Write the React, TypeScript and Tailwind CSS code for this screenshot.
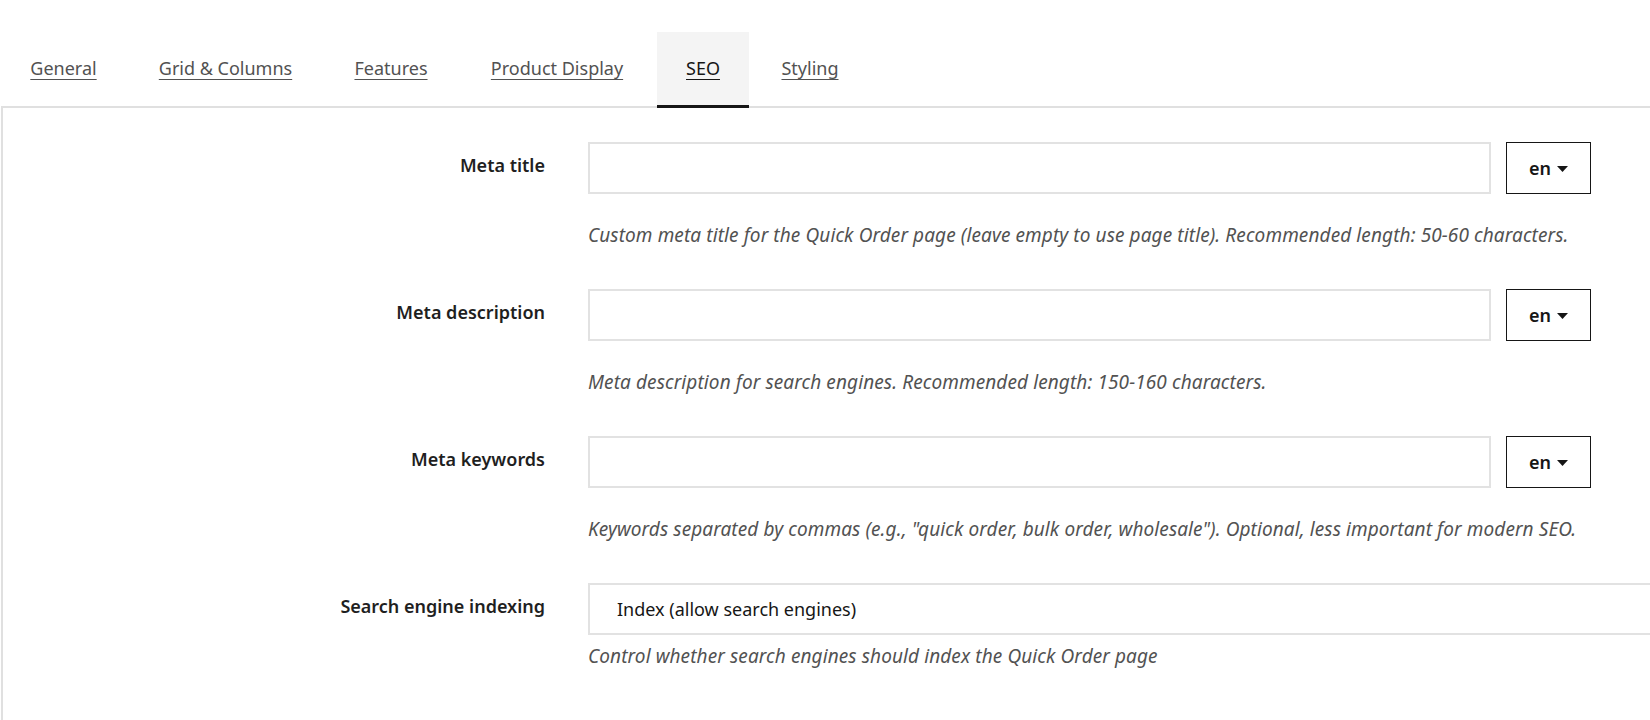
import React from "react";

const TABS = [
  { label: "General", w: "w-[125px]" },
  { label: "Grid & Columns", w: "w-[193px]" },
  { label: "Features", w: "w-[132px]" },
  { label: "Product Display", w: "w-[194px]" },
  { label: "SEO", w: "w-[92px]", active: true },
  { label: "Styling", w: "w-[116px]" },
];

const LANG_FIELDS = [
  {
    label: "Meta title",
    help: "Custom meta title for the Quick Order page (leave empty to use page title). Recommended length: 50-60 characters.",
  },
  {
    label: "Meta description",
    help: "Meta description for search engines. Recommended length: 150-160 characters.",
  },
  {
    label: "Meta keywords",
    help: 'Keywords separated by commas (e.g., "quick order, bulk order, wholesale"). Optional, less important for modern SEO.',
  },
];

function LangButton() {
  return (
    <button className="w-[85px] h-[52px] border border-[#161616] bg-white flex items-center justify-center gap-[6px] text-[18px] font-semibold text-[#161616]">
      <span>en</span>
      <svg width="11" height="6" viewBox="0 0 11 6" className="mt-px">
        <path d="M0 0h11L5.5 6z" fill="#161616" />
      </svg>
    </button>
  );
}

export default function App() {
  return (
    <div
      className="w-[1650px] h-[720px] overflow-hidden bg-white text-[#161616]"
      style={{ fontFamily: "'Noto Sans', Roboto, sans-serif" }}
    >
      {/* Tabs */}
      <div className="pt-8 pl-px flex gap-[3px] relative z-10">
        {TABS.map((t) => (
          <a
            key={t.label}
            href="#"
            className={`${t.w} h-[76px] flex items-center justify-center border-b-[3px] text-[18px] underline underline-offset-[4px] decoration-1 ${
              t.active
                ? "bg-[#f4f4f4] border-[#161616] text-[#161616]"
                : "border-transparent text-[#525252]"
            }`}
          >
            {t.label}
          </a>
        ))}
      </div>

      {/* Panel */}
      <div className="-mt-[2px] ml-px w-[1800px] h-[700px] border-2 border-[#e0e0e0] pt-[34px]">
        {LANG_FIELDS.map((f) => (
          <div key={f.label} className="flex mb-[42px]">
            <label className="w-[542px] shrink-0 text-right text-[18px] font-semibold leading-6 pt-[11px] text-[#1f1f1f]">
              {f.label}
            </label>
            <div className="ml-[43px]">
              <div className="flex gap-[15px]">
                <input
                  type="text"
                  className="w-[903px] h-[52px] border-2 border-[#e2e2e2] bg-white outline-none"
                />
                <LangButton />
              </div>
              <p className="mt-[29px] text-[19px] tracking-[0.1px] leading-6 italic text-[#525252] whitespace-nowrap">
                {f.help}
              </p>
            </div>
          </div>
        ))}

        <div className="flex">
          <label className="w-[542px] shrink-0 text-right text-[18px] font-semibold leading-6 pt-[11px] text-[#1f1f1f]">
            Search engine indexing
          </label>
          <div className="ml-[43px]">
            <div className="w-[1150px] h-[52px] border-2 border-[#e2e2e2] bg-white flex items-center pl-[27px] text-[18px]">
              Index (allow search engines)
            </div>
            <p className="mt-[9px] text-[19px] tracking-[0.1px] leading-6 italic text-[#525252]">
              Control whether search engines should index the Quick Order page
            </p>
          </div>
        </div>
      </div>
    </div>
  );
}
